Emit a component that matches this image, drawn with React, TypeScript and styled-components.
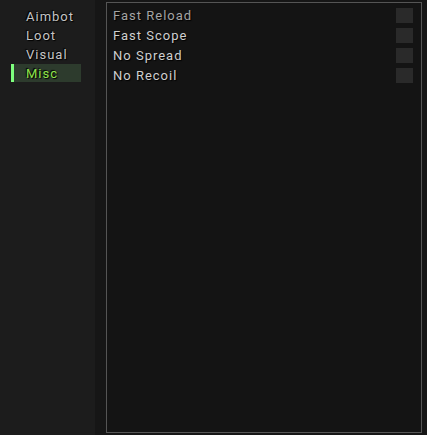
import React, { useState } from 'react';
import styled, { createGlobalStyle } from 'styled-components';

const GlobalStyle = createGlobalStyle`
    html, body {
        margin: 0;
        padding: 0;
        background: #161616;
    }
    body {
        font-family: Roboto, "Liberation Sans", sans-serif;
    }
`;

const Wrapper = styled.div`
    display: flex;
    width: 427px;
    height: 435px;
    background: #161616;
    overflow: hidden;
`;

const Sidebar = styled.nav`
    width: 95px;
    flex-shrink: 0;
    background: #1c1c1c;
    padding: 7px 0 0 11px;
    box-sizing: border-box;
    display: flex;
    flex-direction: column;
    gap: 1px;
`;

const Tab = styled.div<{ active?: boolean }>`
    width: 70px;
    height: 18px;
    box-sizing: border-box;
    display: flex;
    align-items: center;
    padding-left: 15px;
    font-size: 13px;
    letter-spacing: 1px;
    color: ${(p) => (p.active ? '#8fe34a' : '#c4c4c4')};
    background: ${(p) => (p.active ? '#2d3b2d' : 'transparent')};
    border-left: 3px solid ${(p) => (p.active ? '#7dff7d' : 'transparent')};
    padding-left: 12px;
    text-shadow: 1px 1px 1px #000, -1px -1px 1px #000;
    cursor: pointer;
`;

const Main = styled.main`
    flex: 1;
    padding: 2px 5px 2px 11px;
    box-sizing: border-box;
    display: flex;
`;

const Panel = styled.section`
    flex: 1;
    border: 1px solid #555555;
    background: #141414;
    padding: 2px 8px 0 6px;
    display: flex;
    flex-direction: column;
`;

const Row = styled.label`
    height: 20px;
    display: flex;
    align-items: center;
    justify-content: space-between;
    font-size: 13px;
    letter-spacing: 1px;
    color: ${(p: { dim?: boolean }) => (p.dim ? '#a4a4a4' : '#cfcfcf')};
    text-shadow: 1px 1px 1px #000;
`;

const Check = styled.span<{ on?: boolean }>`
    width: 17px;
    height: 15px;
    background: ${(p) => (p.on ? '#5fbf5f' : '#2a2a2a')};
`;

const tabs = ['Aimbot', 'Loot', 'Visual', 'Misc'];
const options = ['Fast Reload', 'Fast Scope', 'No Spread', 'No Recoil'];

const App: React.FC = () => {
    const [tab, setTab] = useState('Misc');
    const [checked, setChecked] = useState<Record<string, boolean>>({});

    return (
        <Wrapper>
            <GlobalStyle />
            <Sidebar>
                {tabs.map((t) => (
                    <Tab key={t} active={t === tab} onClick={() => setTab(t)}>
                        {t}
                    </Tab>
                ))}
            </Sidebar>
            <Main>
                <Panel>
                    {options.map((o, i) => (
                        <Row
                            key={o}
                            dim={i === 0}
                            onClick={() =>
                                setChecked({ ...checked, [o]: !checked[o] })
                            }
                        >
                            {o}
                            <Check on={checked[o]} />
                        </Row>
                    ))}
                </Panel>
            </Main>
        </Wrapper>
    );
};

export default App;
